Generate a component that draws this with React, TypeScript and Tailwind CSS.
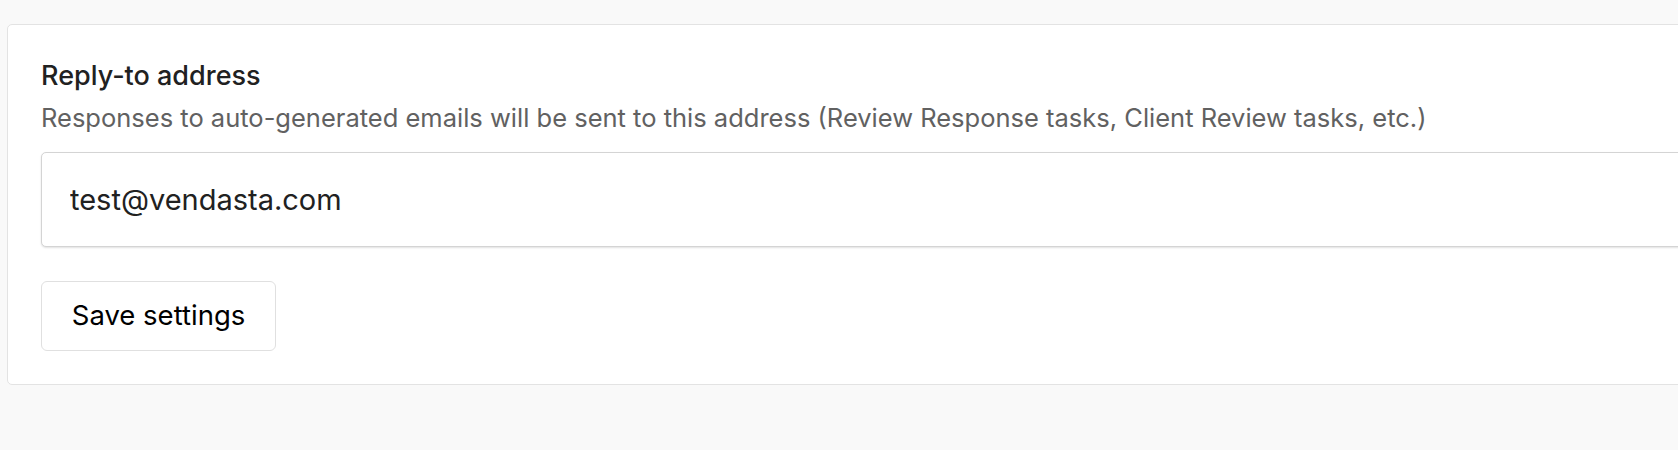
export default function App() {
  return (
    <div
      className="h-[450px] w-full overflow-hidden bg-[#f9f9f9] pt-[24px] pl-[7px]"
      style={{ fontFamily: 'Inter, "Noto Sans", sans-serif' }}
    >
      <div className="w-[1760px] rounded-[5px] border border-[#e3e3e3] bg-white pt-[34px] pb-[33px] pl-[33px]">
        <h2 className="text-[27px] leading-[34px] font-medium text-[#212121]">Reply-to address</h2>
        <p className="mt-[8px] text-[25.5px] leading-[34px] text-[#616161]">
          Responses to auto-generated emails will be sent to this address (Review Response tasks, Client Review
          tasks, etc.)
        </p>
        <div className="mt-[17px] flex h-[95px] w-[1700px] items-center rounded-[5px] border border-[#d4d4d4] bg-white px-[28px] shadow-[0_1px_2px_rgba(0,0,0,0.12)]">
          <input
            className="w-full bg-transparent text-[29px] text-[#212121] outline-none"
            defaultValue="test@vendasta.com"
          />
        </div>
        <button
          type="button"
          className="mt-[34px] flex h-[70px] w-[235px] items-center justify-center rounded-[6px] border border-[#e0e0e0] bg-white text-[27.5px] text-black"
        >
          Save settings
        </button>
      </div>
    </div>
  )
}
